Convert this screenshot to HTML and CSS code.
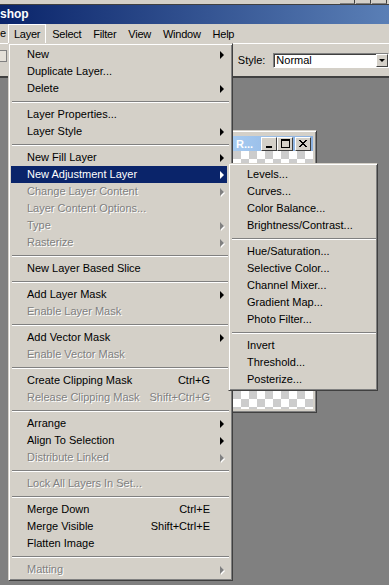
FILE: index.html
```html
<!DOCTYPE html>
<html lang="en">
<head>
    <meta charset="UTF-8">
    <title>Layer menu</title>
    <link rel="stylesheet" href="styles.css">
</head>
<body>

    <div class="top-strip">
        <span class="top-btn"></span>
        <span class="top-btn"></span>
        <span class="top-btn"></span>
    </div>

    <div class="title-bar">shop</div>

    <div class="menu-bar">
        <span class="bar-item cut">e</span>
        <span class="bar-item open">Layer</span>
        <span class="bar-item">Select</span>
        <span class="bar-item">Filter</span>
        <span class="bar-item">View</span>
        <span class="bar-item">Window</span>
        <span class="bar-item">Help</span>
    </div>

    <div class="options-bar">
        <span class="tool-stub"></span>
        <span class="style-label">Style:</span>
        <div class="dropdown">
            <span>Normal</span>
            <span class="drop-btn"><span class="down-arrow"></span></span>
        </div>
    </div>

    <div class="workspace">
        <!-- document window sitting behind the menus -->
        <div class="doc-window">
            <div class="doc-title">
                <span class="doc-name">R...</span>
                <span class="win-btn min"><span></span></span>
                <span class="win-btn max"><span></span></span>
                <span class="win-btn close">
                    <svg width="8" height="7" viewBox="0 0 8 7"><path d="M0 0L7 7M1 0L8 7M7 0L0 7M8 0L1 7" stroke="#000" stroke-width="1"/></svg>
                </span>
            </div>
            <div class="canvas"></div>
        </div>
    </div>

    <div class="menu main-menu">
        <div class="item">New<span class="arrow"></span></div>
        <div class="item">Duplicate Layer...</div>
        <div class="item">Delete<span class="arrow"></span></div>
        <div class="sep"></div>
        <div class="item">Layer Properties...</div>
        <div class="item">Layer Style<span class="arrow"></span></div>
        <div class="sep"></div>
        <div class="item">New Fill Layer<span class="arrow"></span></div>
        <div class="item active">New Adjustment Layer<span class="arrow"></span></div>
        <div class="item off">Change Layer Content<span class="arrow"></span></div>
        <div class="item off">Layer Content Options...</div>
        <div class="item off">Type<span class="arrow"></span></div>
        <div class="item off">Rasterize<span class="arrow"></span></div>
        <div class="sep"></div>
        <div class="item">New Layer Based Slice</div>
        <div class="sep"></div>
        <div class="item">Add Layer Mask<span class="arrow"></span></div>
        <div class="item off">Enable Layer Mask</div>
        <div class="sep"></div>
        <div class="item">Add Vector Mask<span class="arrow"></span></div>
        <div class="item off">Enable Vector Mask</div>
        <div class="sep"></div>
        <div class="item">Create Clipping Mask<span class="key">Ctrl+G</span></div>
        <div class="item off">Release Clipping Mask<span class="key">Shift+Ctrl+G</span></div>
        <div class="sep"></div>
        <div class="item">Arrange<span class="arrow"></span></div>
        <div class="item">Align To Selection<span class="arrow"></span></div>
        <div class="item off">Distribute Linked<span class="arrow"></span></div>
        <div class="sep"></div>
        <div class="item off">Lock All Layers In Set...</div>
        <div class="sep"></div>
        <div class="item">Merge Down<span class="key">Ctrl+E</span></div>
        <div class="item">Merge Visible<span class="key">Shift+Ctrl+E</span></div>
        <div class="item">Flatten Image</div>
        <div class="sep"></div>
        <div class="item off">Matting<span class="arrow"></span></div>
    </div>

    <div class="menu sub-menu">
        <div class="item">Levels...</div>
        <div class="item">Curves...</div>
        <div class="item">Color Balance...</div>
        <div class="item">Brightness/Contrast...</div>
        <div class="sep"></div>
        <div class="item">Hue/Saturation...</div>
        <div class="item">Selective Color...</div>
        <div class="item">Channel Mixer...</div>
        <div class="item">Gradient Map...</div>
        <div class="item">Photo Filter...</div>
        <div class="sep"></div>
        <div class="item">Invert</div>
        <div class="item">Threshold...</div>
        <div class="item">Posterize...</div>
    </div>

</body>
</html>
```

FILE: styles.css
```css
body {
    margin: 0;
    width: 389px;
    height: 585px;
    overflow: hidden;
    position: relative;
    background-color: #808080;
    font-family: 'Liberation Sans', Arial, sans-serif;
    font-size: 11px;
    color: #000;
    display: flex;
    flex-direction: column;
}

.top-strip {
    height: 4px;
    background-color: #d4d0c8;
    border-bottom: 1px solid #404040;
    display: flex;
    justify-content: flex-end;
    padding-right: 2px;
}

.top-btn {
    width: 14px;
    height: 3px;
    border-right: 1px solid #404040;
    border-bottom: 1px solid #808080;
    margin-left: 1px;
}

.title-bar {
    height: 19px;
    line-height: 19px;
    background: linear-gradient(to right, #0a246a, #5a7fb6);
    color: #fff;
    font-weight: bold;
    font-size: 12px;
}

.menu-bar {
    height: 19px;
    background-color: #d4d0c8;
    display: flex;
    align-items: stretch;
    letter-spacing: -0.25px;
}

.bar-item {
    padding: 0 5px;
    line-height: 18px;
    border: 1px solid transparent;
    border-bottom: 0;
}

.bar-item.cut {
    padding: 0;
    width: 8px;
    border: 0;
}

.bar-item.open {
    border-color: #fff;
    border-bottom: 0;
}

.options-bar {
    height: 32px;
    background-color: #d4d0c8;
    border-top: 1px solid #fff;
    border-bottom: 2px solid #404040;
    display: flex;
    align-items: center;
}

.tool-stub {
    width: 6px;
    height: 10px;
    margin-top: -8px;
    border: 1px solid #808080;
    border-left: 0;
    background-color: #e4e0d8;
}

.style-label {
    margin-left: 231px;
    margin-right: 8px;
}

.dropdown {
    width: 115px;
    height: 13px;
    background-color: #fff;
    border: 1px solid #808080;
    border-right-color: #fff;
    border-bottom-color: #fff;
    box-shadow: inset 1px 1px 0 #404040;
    display: flex;
    align-items: center;
    justify-content: space-between;
    padding-left: 2px;
    line-height: 13px;
}

.drop-btn {
    width: 10px;
    height: 11px;
    margin-top: 1px;
    background-color: #d4d0c8;
    border: 1px solid #fff;
    border-right-color: #404040;
    border-bottom-color: #404040;
    display: flex;
    align-items: center;
    justify-content: center;
}

.down-arrow {
    border-top: 3px solid #000;
    border-left: 3px solid transparent;
    border-right: 3px solid transparent;
}

.workspace {
    flex: 1;
    position: relative;
}

.doc-window {
    position: absolute;
    left: 229px;
    top: 52px;
    width: 80px;
    height: 273px;
    background-color: #d4d0c8;
    border: 1px solid #d4d0c8;
    border-right-color: #404040;
    border-bottom-color: #404040;
    box-shadow: inset 1px 1px 0 #fff, inset -1px -1px 0 #808080;
    padding: 5px 3px 3px 3px;
    display: flex;
    flex-direction: column;
}

.doc-title {
    height: 15px;
    background: linear-gradient(to right, #a6caf0, #8ab0e0);
    display: flex;
    align-items: center;
    padding-right: 2px;
}

.doc-name {
    flex: 1;
    color: #fff;
    font-weight: bold;
    padding-left: 3px;
}

.win-btn {
    width: 14px;
    height: 12px;
    background-color: #d4d0c8;
    border: 1px solid #fff;
    border-right-color: #404040;
    border-bottom-color: #404040;
    display: flex;
    align-items: center;
    justify-content: center;
}

.win-btn.close {
    margin-left: 2px;
}

.min span {
    width: 6px;
    height: 2px;
    background-color: #000;
    margin-top: 6px;
}

.max span {
    width: 7px;
    height: 6px;
    border: 1px solid #000;
    border-top-width: 2px;
}

.canvas {
    flex: 1;
    background: repeating-conic-gradient(#fff 0 25%, #cccccc 0 50%) 0 0 / 16px 16px;
}

.menu {
    position: absolute;
    background-color: #d4d0c8;
    border: 1px solid #d4d0c8;
    border-right-color: #404040;
    border-bottom-color: #404040;
    box-shadow: inset 1px 1px 0 #fff, inset -1px -1px 0 #808080;
}

.main-menu {
    left: 8px;
    top: 43px;
    width: 216px;
    padding: 2px 5px 2px 2px;
}

.sub-menu {
    left: 228px;
    top: 163px;
    width: 143px;
    padding: 2px 3px 2px 2px;
}

.item {
    height: 17px;
    line-height: 17px;
    padding-left: 16px;
    padding-right: 3px;
    display: flex;
    align-items: center;
    white-space: nowrap;
}

.item.active {
    background-color: #0a246a;
    color: #fff;
}

.item.off {
    color: #808080;
    text-shadow: 1px 1px 0 #fff;
}

.key {
    margin-left: auto;
    margin-right: 14px;
}

.arrow {
    margin-left: auto;
    width: 0;
    height: 0;
    border-left: 4px solid #000;
    border-top: 4px solid transparent;
    border-bottom: 4px solid transparent;
}

.item.active .arrow {
    border-left-color: #fff;
}

.item.off .arrow {
    border-left-color: #808080;
    filter: drop-shadow(1px 1px 0 #fff);
}

/* 9px tall: grey line at 4, white line at 5 */
.sep {
    height: 0;
    margin: 4px -2px 3px 1px;
    border-top: 1px solid #808080;
    border-bottom: 1px solid #fff;
}
```
